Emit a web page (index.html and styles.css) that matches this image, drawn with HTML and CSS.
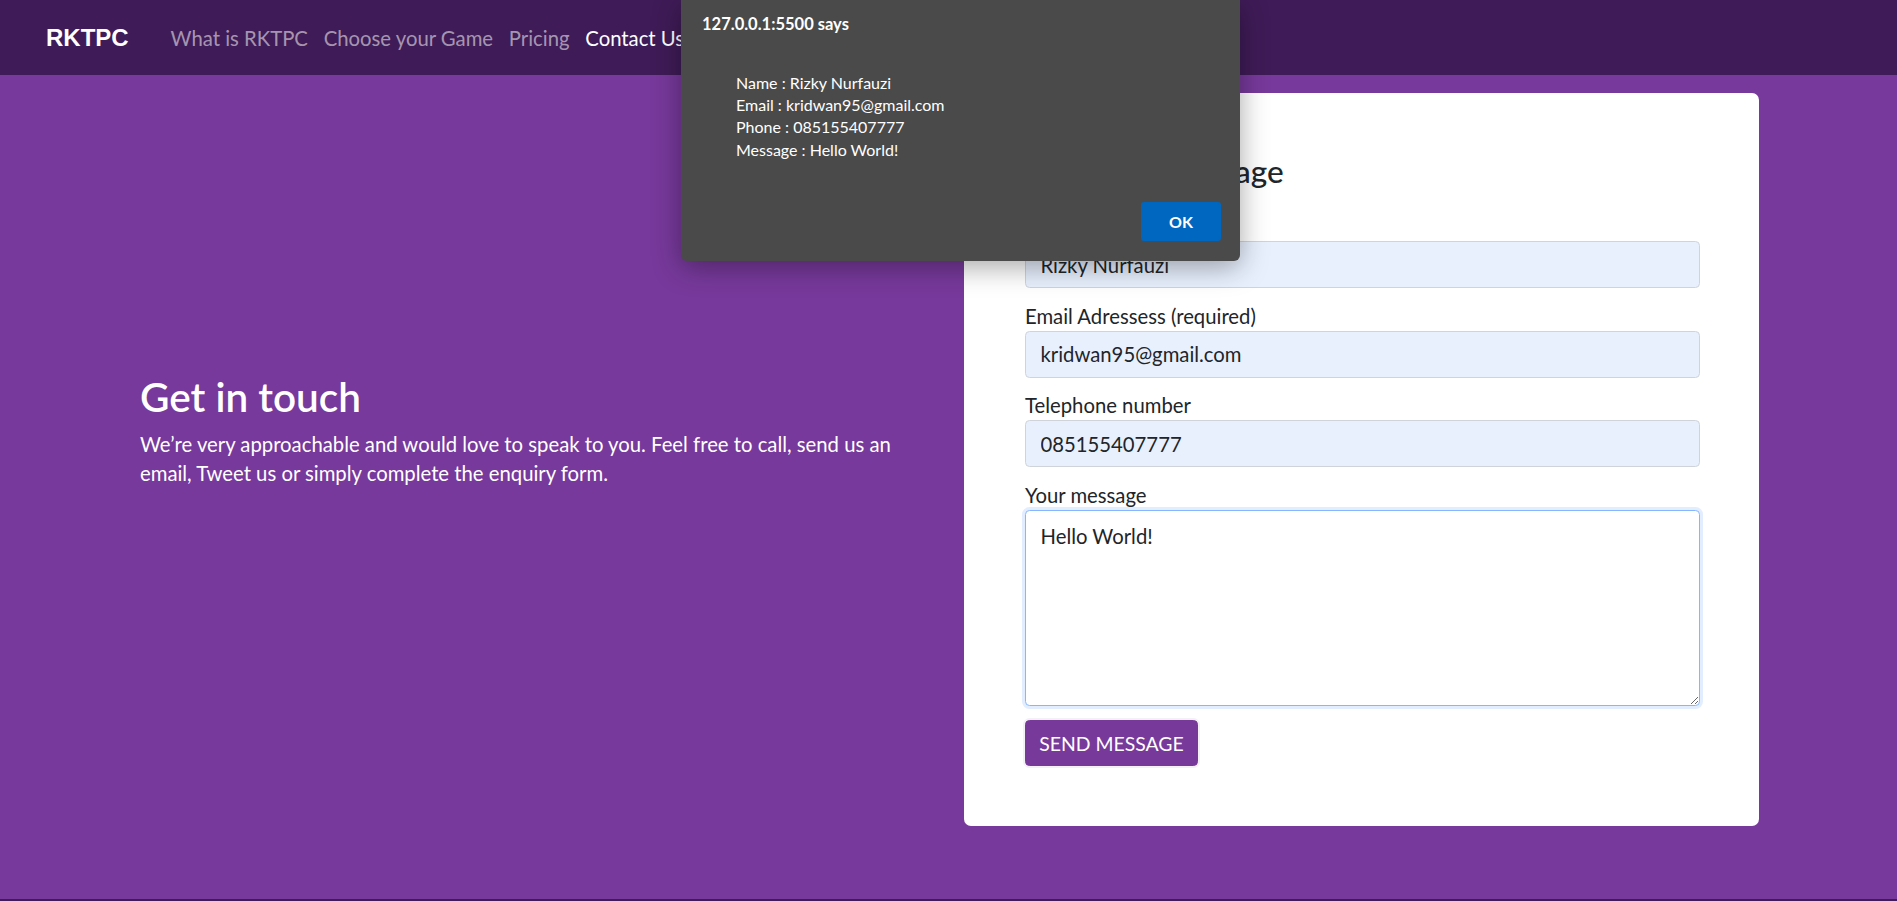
FILE: index.html
```html
<!DOCTYPE html>
<html lang="en">
<head>
<meta charset="utf-8">
<title>RKTPC - Contact Us</title>
<link rel="stylesheet" href="styles.css">
</head>
<body>
<nav class="navbar">
  <a class="brand" href="#">RKTPC</a>
  <div class="nav-links">
    <a class="nav-link" href="#">What is RKTPC</a>
    <a class="nav-link" href="#">Choose your Game</a>
    <a class="nav-link" href="#">Pricing</a>
    <a class="nav-link active" href="#">Contact Us</a>
  </div>
</nav>

<main class="contact">
  <section class="intro">
    <h2 class="intro-title">Get in touch</h2>
    <p class="intro-text">We’re very approachable and would love to speak to you. Feel free to call, send us an email, Tweet us or simply complete the enquiry form.</p>
  </section>

  <form class="card">
    <h4 class="card-title">Send us a message</h4>
    <div class="field">
      <label class="label" for="name">Full name</label>
      <input class="control autofill" id="name" type="text" value="Rizky Nurfauzi">
    </div>
    <div class="field">
      <label class="label" for="email">Email Adressess (required)</label>
      <input class="control autofill" id="email" type="email" value="kridwan95@gmail.com">
    </div>
    <div class="field">
      <label class="label" for="phone">Telephone number</label>
      <input class="control autofill" id="phone" type="tel" value="085155407777">
    </div>
    <div class="field">
      <label class="label" for="msg">Your message</label>
      <textarea class="control message focused" id="msg">Hello World!</textarea>
    </div>
    <button class="send" type="button">SEND MESSAGE</button>
  </form>
</main>
<footer class="footer"></footer>

<div class="alert-dialog">
  <div class="alert-title">127.0.0.1:5500 says</div>
  <div class="alert-body">
    <div>Name : Rizky Nurfauzi</div>
    <div>Email : kridwan95@gmail.com</div>
    <div>Phone : 085155407777</div>
    <div>Message : Hello World!</div>
  </div>
  <div class="alert-actions">
    <button class="alert-ok" type="button">OK</button>
  </div>
</div>
</body>
</html>
```
FILE: styles.css
```css
* { box-sizing: border-box; }

html, body {
  margin: 0;
  padding: 0;
}

body {
  font-family: Lato, "Open Sans", "Noto Sans", sans-serif;
  color: #212529;
  background: #77399b;
  overflow: hidden;
}

/* navbar */
.navbar {
  height: 75px;
  background: #3f1b57;
  display: flex;
  align-items: center;
  padding-left: 46px;
}

.brand {
  font-family: "Liberation Sans", Arial, sans-serif;
  font-weight: 700;
  font-size: 24px;
  color: #fff;
  text-decoration: none;
  margin-right: 34px;
}

.nav-links {
  display: flex;
  align-items: center;
}

.nav-link {
  font-size: 20.3px;
  padding: 0 7.9px;
  color: rgba(255, 255, 255, 0.55);
  text-decoration: none;
}

.nav-link.active {
  color: #fff;
}

/* main area */
.contact {
  display: grid;
  grid-template-columns: 1fr 795px;
  column-gap: 29px;
  align-items: center;
  padding: 18px 138px 73px 140px;
  background: #77399b;
}

.intro {
  color: #fff;
  padding-bottom: 58px;
}

.intro-title {
  margin: 0 0 10px;
  font-size: 40.5px;
  line-height: 46px;
  font-weight: 600;
}

.intro-text {
  margin: 0;
  font-size: 20.3px;
  line-height: 29px;
  max-width: 780px;
}

/* card form */
.card {
  background: #fff;
  border-radius: 7px;
  padding: 61px 59px 60px 61px;
  height: 733px;
}

.card-title {
  margin: 0 0 23px;
  font-size: 31.5px;
  line-height: 35px;
  font-weight: 500;
  color: #212529;
}

.field {
  margin-bottom: 13.5px;
}

.label {
  display: block;
  font-size: 20.3px;
  line-height: 29px;
  color: #212529;
}

.control {
  display: block;
  width: 100%;
  height: 47px;
  padding: 0 14.5px;
  font-family: inherit;
  font-size: 20.3px;
  color: #212529;
  border: 1px solid #ced4da;
  border-radius: 4.5px;
  background: #fff;
  outline: none;
}

.autofill {
  background: #e8f0fe;
}

.message {
  height: 196px;
  padding: 11px 14.5px;
  line-height: 29px;
  resize: vertical;
}

.focused {
  border-color: #86b7fe;
  box-shadow: 0 0 0 3px rgba(13, 110, 253, 0.12);
}

.field:last-of-type {
  margin-bottom: 14.5px;
}

.send {
  height: 46px;
  width: 173px;
  padding: 0;
  font-family: inherit;
  font-size: 19.4px;
  color: #fff;
  background: #783a9a;
  border: 1px solid #783a9a;
  border-radius: 4.5px;
  box-shadow: 0 0 0 2px rgba(120, 58, 154, 0.08);
}

.footer {
  height: 2px;
  background: #3f1b57;
}

/* browser alert dialog */
.alert-dialog {
  position: absolute;
  left: 681px;
  top: 0;
  width: 559px;
  height: 261px;
  background: #4a4a4a;
  border-radius: 0 0 6px 6px;
  box-shadow: 0 6px 28px rgba(0, 0, 0, 0.35);
  color: #fff;
  padding: 14px 19px 20px 21px;
  display: flex;
  flex-direction: column;
}

.alert-title {
  font-size: 16.5px;
  font-weight: 700;
  line-height: 20px;
}

.alert-body {
  margin-top: 38px;
  padding-left: 34px;
  font-size: 16px;
  line-height: 22.2px;
}

.alert-actions {
  margin-top: auto;
  display: flex;
  justify-content: flex-end;
}

.alert-ok {
  width: 80px;
  height: 39px;
  background: #0067c0;
  border: none;
  border-radius: 3px;
  color: #fff;
  font-family: inherit;
  font-weight: 700;
  font-size: 16px;
}
```
